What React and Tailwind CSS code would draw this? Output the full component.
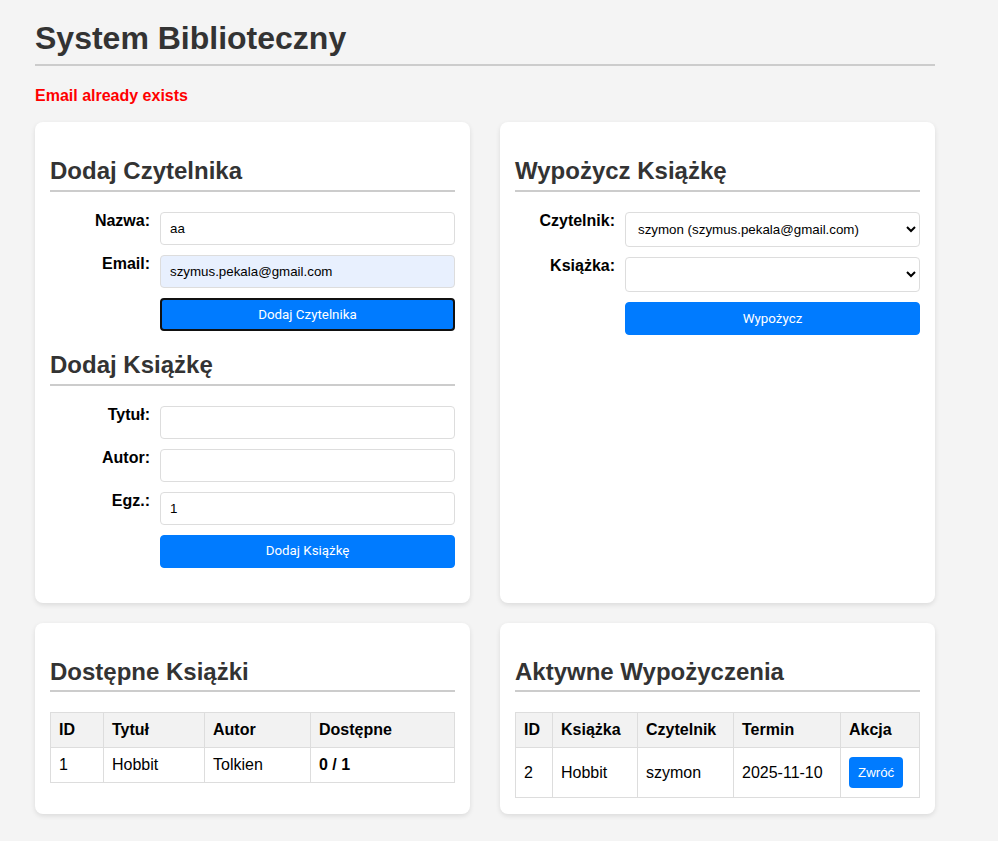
import { useState } from 'react';

const FONT = "font-['Liberation_Sans',Arial,sans-serif]";

const books = [{ id: 1, title: 'Hobbit', author: 'Tolkien', available: 0, total: 1 }];
const loans = [{ id: 2, book: 'Hobbit', reader: 'szymon', due: '2025-11-10' }];

function Card({ children }) {
    return (
        <div className="bg-white rounded-lg shadow-[0_2px_5px_rgba(0,0,0,0.1)] px-[15px] pt-[15px] pb-[16px]">
            {children}
        </div>
    );
}

function SectionTitle({ children }) {
    return (
        <h2 className="mt-[20px] mb-[20px] text-2xl leading-[27.6px] font-bold text-[#333] pb-[5px] border-b-2 border-[#ccc]">
            {children}
        </h2>
    );
}

function FieldRow({ label, children }) {
    return (
        <div className="flex items-start mb-[10px]">
            <label className="w-[100px] text-right font-bold text-base leading-[18.4px] text-black">{label}</label>
            <div className="ml-[10px] w-[295px]">{children}</div>
        </div>
    );
}

const inputCls =
    'w-full h-[33px] px-[9px] border border-[#ddd] rounded text-[13.33px] text-black outline-none';

function SubmitButton({ children, focused }) {
    return (
        <div className="flex">
            <div className="w-[110px]"></div>
            <button
                className={`w-[295px] h-[33px] rounded bg-[#007bff] text-white text-[13.33px] font-['Roboto',Arial,sans-serif] ${
                    focused ? 'border-2 border-[#111]' : 'border border-[#007bff]'
                }`}
            >
                {children}
            </button>
        </div>
    );
}

const cell = 'border border-[#ddd] p-[8px] leading-[18px]';

export default function App() {
    const [name, setName] = useState('aa');
    const [email, setEmail] = useState('szymus.pekala@gmail.com');
    const [copies, setCopies] = useState('1');

    return (
        <div className={`min-h-screen bg-[#f4f4f4] px-[35px] pt-[20px] pb-[28px] ${FONT}`}>
            <div className="w-[900px]">
                <h1 className="text-[32px] leading-[37px] font-bold text-[#333] pb-[7px] border-b-2 border-[#ccc]">
                    System Biblioteczny
                </h1>
                <p className="mt-[21px] text-base leading-[18.4px] font-bold text-[#ff0000]">Email already exists</p>

                <div className="grid grid-cols-2 gap-x-[30px] gap-y-[20px] mt-[17px]">
                    {/* Dodaj czytelnika + książkę */}
                    <Card>
                        <SectionTitle>Dodaj Czytelnika</SectionTitle>
                        <FieldRow label="Nazwa:">
                            <input className={inputCls} value={name} onChange={(e) => setName(e.target.value)} />
                        </FieldRow>
                        <FieldRow label="Email:">
                            <input
                                className={`${inputCls} bg-[#e8f0fe]`}
                                value={email}
                                onChange={(e) => setEmail(e.target.value)}
                            />
                        </FieldRow>
                        <SubmitButton focused>Dodaj Czytelnika</SubmitButton>

                        <SectionTitle>Dodaj Książkę</SectionTitle>
                        <FieldRow label="Tytuł:">
                            <input className={inputCls} />
                        </FieldRow>
                        <FieldRow label="Autor:">
                            <input className={inputCls} />
                        </FieldRow>
                        <FieldRow label="Egz.:">
                            <input className={inputCls} value={copies} onChange={(e) => setCopies(e.target.value)} />
                        </FieldRow>
                        <SubmitButton>Dodaj Książkę</SubmitButton>
                        <div className="h-[19px]"></div>
                    </Card>

                    {/* Wypożycz */}
                    <Card>
                        <SectionTitle>Wypożycz Książkę</SectionTitle>
                        <FieldRow label="Czytelnik:">
                            <select className="w-full h-[35px] px-[8px] bg-white border border-[#ddd] rounded text-[13.33px] text-black">
                                <option>szymon (szymus.pekala@gmail.com)</option>
                            </select>
                        </FieldRow>
                        <FieldRow label="Książka:">
                            <select className="w-full h-[35px] px-[8px] bg-white border border-[#ddd] rounded text-[13.33px] text-black">
                                <option></option>
                            </select>
                        </FieldRow>
                        <SubmitButton>Wypożycz</SubmitButton>
                    </Card>

                    {/* Dostępne książki */}
                    <Card>
                        <SectionTitle>Dostępne Książki</SectionTitle>
                        <table className="w-full table-fixed border-collapse text-base text-black">
                            <colgroup>
                                <col className="w-[53px]" />
                                <col className="w-[101px]" />
                                <col className="w-[106px]" />
                                <col />
                            </colgroup>
                            <thead>
                                <tr className="bg-[#f2f2f2]">
                                    {['ID', 'Tytuł', 'Autor', 'Dostępne'].map((h) => (
                                        <th key={h} className={`${cell} text-left font-bold`}>
                                            {h}
                                        </th>
                                    ))}
                                </tr>
                            </thead>
                            <tbody>
                                {books.map((b) => (
                                    <tr key={b.id}>
                                        <td className={cell}>{b.id}</td>
                                        <td className={cell}>{b.title}</td>
                                        <td className={cell}>{b.author}</td>
                                        <td className={`${cell} font-bold`}>
                                            {b.available} / {b.total}
                                        </td>
                                    </tr>
                                ))}
                            </tbody>
                        </table>
                    </Card>

                    {/* Aktywne wypożyczenia */}
                    <Card>
                        <SectionTitle>Aktywne Wypożyczenia</SectionTitle>
                        <table className="w-full table-fixed border-collapse text-base text-black">
                            <colgroup>
                                <col className="w-[37px]" />
                                <col className="w-[85px]" />
                                <col className="w-[96px]" />
                                <col className="w-[107px]" />
                                <col />
                            </colgroup>
                            <thead>
                                <tr className="bg-[#f2f2f2]">
                                    {['ID', 'Książka', 'Czytelnik', 'Termin', 'Akcja'].map((h) => (
                                        <th key={h} className={`${cell} text-left font-bold`}>
                                            {h}
                                        </th>
                                    ))}
                                </tr>
                            </thead>
                            <tbody>
                                {loans.map((l) => (
                                    <tr key={l.id} className="h-[50px]">
                                        <td className={cell}>{l.id}</td>
                                        <td className={cell}>{l.book}</td>
                                        <td className={cell}>{l.reader}</td>
                                        <td className={cell}>{l.due}</td>
                                        <td className={cell}>
                                            <button className="h-[31px] px-[9px] rounded bg-[#007bff] text-white text-[13.33px] align-middle">
                                                Zwróć
                                            </button>
                                        </td>
                                    </tr>
                                ))}
                            </tbody>
                        </table>
                    </Card>
                </div>
            </div>
        </div>
    );
}
